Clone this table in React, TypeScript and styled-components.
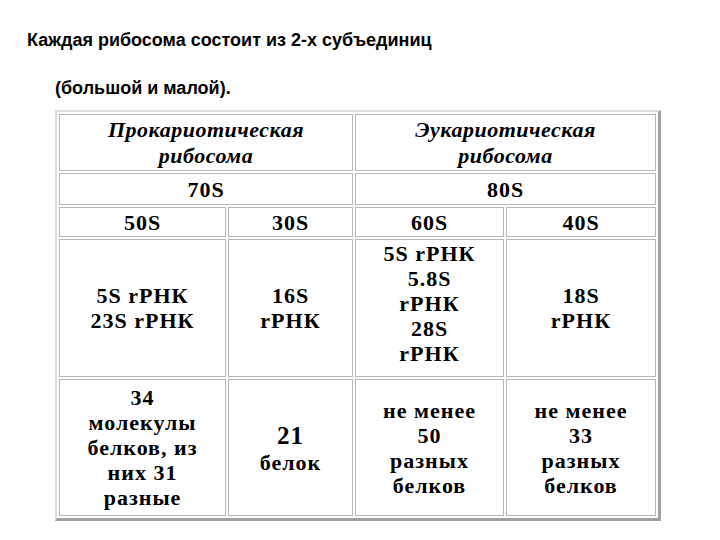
import * as React from 'react';
import styled, { createGlobalStyle } from 'styled-components';

const GlobalStyle = createGlobalStyle`
	html, body {
		margin: 0;
		padding: 0;
		background: #ffffff;
	}
`;

const Slide = styled.div`
	width: 720px;
	height: 540px;
	box-sizing: border-box;
	padding: 28px 0px 0px 27px;
	background: #ffffff;
	overflow: hidden;
`;

const Title = styled.p<{ $indent?: number }>`
	margin: 0px 0px 0px ${(p) => p.$indent || 0}px;
	font-family: 'Liberation Sans', Arial, sans-serif;
	font-weight: bold;
	font-size: 18px;
	line-height: 24px;
	color: #000000;
	& + & {
		margin-top: 24px;
	}
`;

const RiboTable = styled.table`
	margin: 10px 0px 0px 28px;
	width: 605px;
	table-layout: fixed;
	border-collapse: separate;
	border-spacing: 2px;
	border-style: solid;
	border-width: 2px 3px 3px 2px;
	border-color: #dcdcdc #a0a0a0 #a0a0a0 #dcdcdc;
`;

// высота ячейки без нижнего отступа: $lift поднимает текст вверх
const Cell = styled.td<{ $h?: number; $italic?: boolean; $lift?: number }>`
	height: ${(p) => (p.$h || 30) - (p.$lift || 0)}px;
	padding: 0px 2px ${(p) => p.$lift || 0}px 2px;
	border: 1px solid #b8b8b8;
	text-align: center;
	vertical-align: middle;
	font-family: 'Liberation Serif', 'Times New Roman', serif;
	font-weight: bold;
	font-style: ${(p) => (p.$italic ? 'italic' : 'normal')};
	font-size: 22px;
	line-height: ${(p) => (p.$italic ? 26 : 25)}px;
	letter-spacing: ${(p) => (p.$italic ? 0.5 : 1)}px;
	color: #000000;
	& > .big {
		font-size: 25px;
		line-height: 29px;
	}
`;

const App: React.FC = () => {
	return (
		<>
			<GlobalStyle />
			<Slide>
				<Title>Каждая рибосома состоит из 2-х субъединиц</Title>
				<Title $indent={28}>(большой и малой).</Title>
				<RiboTable>
					<colgroup>
						<col style={{ width: 167 }} />
						<col style={{ width: 125 }} />
						<col style={{ width: 149 }} />
						<col style={{ width: 150 }} />
					</colgroup>
					<tbody>
						<tr>
							<Cell colSpan={2} $h={55} $italic>
								Прокариотическая
								<br />
								рибосома
							</Cell>
							<Cell colSpan={2} $h={55} $italic>
								Эукариотическая
								<br />
								рибосома
							</Cell>
						</tr>
						<tr>
							<Cell colSpan={2} $h={30}>70S</Cell>
							<Cell colSpan={2} $h={30}>80S</Cell>
						</tr>
						<tr>
							<Cell $h={28}>50S</Cell>
							<Cell $h={28}>30S</Cell>
							<Cell $h={28}>60S</Cell>
							<Cell $h={28}>40S</Cell>
						</tr>
						<tr>
							<Cell $h={136}>
								5S rРНК
								<br />
								23S rРНК
							</Cell>
							<Cell $h={136}>
								16S
								<br />
								rРНК
							</Cell>
							<Cell $h={136} $lift={10}>
								5S rРНК
								<br />
								5.8S
								<br />
								rРНК
								<br />
								28S
								<br />
								rРНК
							</Cell>
							<Cell $h={136}>
								18S
								<br />
								rРНК
							</Cell>
						</tr>
						<tr>
							<Cell $h={135}>
								34
								<br />
								молекулы
								<br />
								белков, из
								<br />
								них 31
								<br />
								разные
							</Cell>
							<Cell $h={135}>
								<span className="big">21</span>
								<br />
								белок
							</Cell>
							<Cell $h={135}>
								не менее
								<br />
								50
								<br />
								разных
								<br />
								белков
							</Cell>
							<Cell $h={135}>
								не менее
								<br />
								33
								<br />
								разных
								<br />
								белков
							</Cell>
						</tr>
					</tbody>
				</RiboTable>
			</Slide>
		</>
	);
};

export default App;
